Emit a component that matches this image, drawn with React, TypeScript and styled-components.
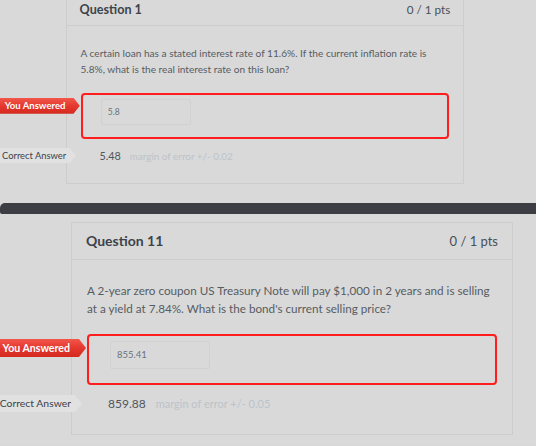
import React from "react";
import styled, {createGlobalStyle} from "styled-components";

const GlobalStyle = createGlobalStyle`
    html, body {
        margin: 0;
        padding: 0;
        background: #d9d9d9;
        font-family: Lato, "Open Sans", "Liberation Sans", sans-serif;
        overflow: hidden;
    }
`;

type S = { $s: number };
const px = (n: number) => (p: S) => `${n * p.$s}px`;

const Page = styled.div`
    width: 536px;
    height: 446px;
    display: flex;
    flex-direction: column;
    overflow: hidden;
`;

const Section = styled.div<{ $left: number; $cropTop: number; $after: number }>`
    padding-left: ${p => p.$left}px;
    margin-top: ${p => -p.$cropTop}px;
    margin-bottom: ${p => p.$after}px;
`;

const Divider = styled.div`
    height: 11px;
    background: #3d3e43;
    border-top-left-radius: 5px;
    border-bottom-left-radius: 2px;
    margin-bottom: 8px;
    flex-shrink: 0;
`;

const Card = styled.div<S>`
    width: ${px(442)};
    box-sizing: border-box;
    border: 1px solid #cdcdcd;
`;

const Header = styled.div<S>`
    height: ${px(36)};
    border-bottom: 1px solid #cdcdcd;
    padding: 0 ${px(14)};
    display: flex;
    align-items: center;
    justify-content: space-between;
`;

const Title = styled.div<S>`
    font-size: ${px(14)};
    font-weight: 700;
    color: #3d434a;
`;

const Points = styled.div<S>`
    font-size: ${px(13)};
    color: #4a5057;
`;

const Body = styled.div<S>`
    padding: ${px(21)} ${px(15)} ${px(22)};
`;

const Text = styled.p<S & { $size: number }>`
    margin: 0 0 ${px(17)};
    font-size: ${p => p.$size}px;
    line-height: ${px(18)};
    color: #575c62;
`;

const AnswerBox = styled.div<S>`
    position: relative;
    height: ${px(51)};
    box-sizing: border-box;
    border: 2px solid #ff1d1d;
    border-radius: 4px;
    padding: ${px(5)} ${px(21)};
`;

const Input = styled.div<S>`
    width: ${px(100)};
    height: ${px(28)};
    box-sizing: border-box;
    border: 1px solid #d1d1d1;
    border-radius: 2px;
    padding-left: ${px(6)};
    display: flex;
    align-items: center;
    font-size: ${px(9.5)};
    color: #6a737c;
`;

const CorrectRow = styled.div<S>`
    position: relative;
    margin-top: ${px(10)};
    height: ${px(17)};
    padding-left: ${px(21)};
    display: flex;
    align-items: center;
    gap: ${px(10)};
`;

const Value = styled.span<S>`
    font-size: ${px(12)};
    color: #50565d;
`;

const Margin = styled.span<S>`
    font-size: ${px(11)};
    color: #bcc3ca;
`;

const Tag = styled.div<S & { $kind: "you" | "correct" }>`
    position: absolute;
    right: calc(100% + ${p => (p.$kind === "you" ? 3 : 5) * p.$s}px);
    top: ${p => (p.$kind === "you" ? 3 : 0) * p.$s}px;
    width: 120px;
    height: ${p => (p.$kind === "you" ? 18 : 17) * p.$s}px;
    box-sizing: border-box;
    padding-right: ${p => (p.$kind === "you" ? 16 : 11) * p.$s}px;
    display: flex;
    align-items: center;
    justify-content: flex-end;
    white-space: nowrap;
    font-size: ${p => (p.$kind === "you" ? 10.6 : 10.4) * p.$s}px;
    font-weight: ${p => (p.$kind === "you" ? 700 : 400)};
    color: ${p => (p.$kind === "you" ? "#ffffff" : "#3b4148")};
    background: ${p => (p.$kind === "you"
        ? "linear-gradient(#f2564b, #e3352b 55%, #d42a20)"
        : "#e1e1e1")};
    clip-path: polygon(0 0, calc(100% - ${px(7)}) 0, 100% 50%, calc(100% - ${px(7)}) 100%, 0 100%);
`;

interface Question {
    title: string;
    text: string;
    textSize: number;
    answer: string;
    correct: string;
    margin: string;
}

function QuestionCard({q, s}: { q: Question; s: number }) {
    return (
        <Card $s={s}>
            <Header $s={s}>
                <Title $s={s}>{q.title}</Title>
                <Points $s={s}>0 / 1 pts</Points>
            </Header>
            <Body $s={s}>
                <Text $s={s} $size={q.textSize}>{q.text}</Text>
                <AnswerBox $s={s}>
                    <Tag $s={s} $kind="you">You Answered</Tag>
                    <Input $s={s}>{q.answer}</Input>
                </AnswerBox>
                <CorrectRow $s={s}>
                    <Tag $s={s} $kind="correct">Correct Answer</Tag>
                    <Value $s={s}>{q.correct}</Value>
                    <Margin $s={s}>margin of error +/- {q.margin}</Margin>
                </CorrectRow>
            </Body>
        </Card>
    );
}

const questions: Question[] = [
    {
        title: "Question 1",
        text: "A certain loan has a stated interest rate of 11.6%. If the current inflation rate is 5.8%, what is the real interest rate on this loan?",
        textSize: 10.1,
        answer: "5.8",
        correct: "5.48",
        margin: "0.02",
    },
    {
        title: "Question 11",
        text: "A 2-year zero coupon US Treasury Note will pay $1,000 in 2 years and is selling at a yield at 7.84%. What is the bond's current selling price?",
        textSize: 11.7,
        answer: "855.41",
        correct: "859.88",
        margin: "0.05",
    },
];

export default function App() {
    return (
        <Page>
            <GlobalStyle/>
            <Section $left={66} $cropTop={8} $after={19}>
                <QuestionCard q={questions[0]} s={0.9}/>
            </Section>
            <Divider/>
            <Section $left={71} $cropTop={0} $after={0}>
                <QuestionCard q={questions[1]} s={1}/>
            </Section>
        </Page>
    );
}
